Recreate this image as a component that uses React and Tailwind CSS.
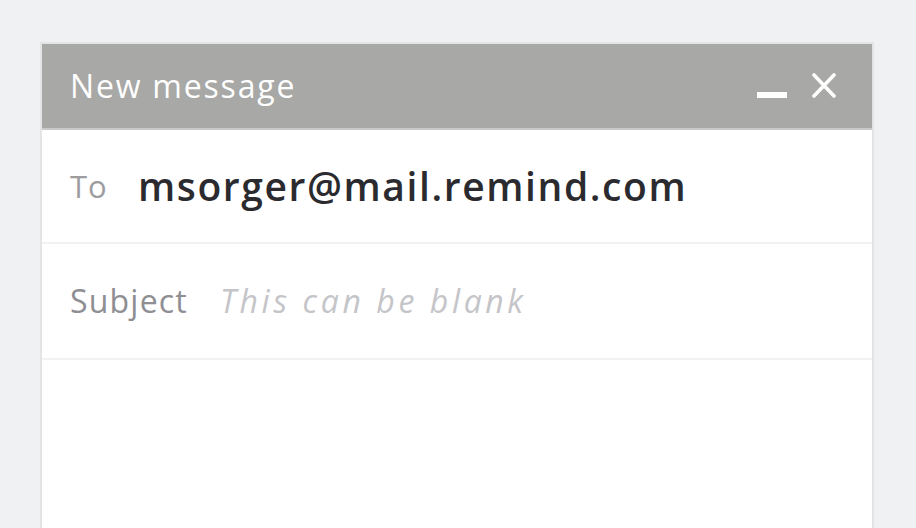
import React from 'react';

export default function App() {
  return (
    <div className="w-[916px] h-[528px] overflow-hidden bg-[#f0f1f3] pt-[42px] pl-[40px] pr-[42px]" style={{ fontFamily: '"Open Sans", Lato, sans-serif' }}>
      <div className="border-2 border-b-0 border-[#e3e4e6] bg-white h-[500px]">
        {/* Header */}
        <div className="h-[86px] bg-[#a8a8a6] border-b-2 border-[#c9c9c9] flex items-center justify-between pl-[28px] pr-[36px]">
          <span className="text-white text-[32px] tracking-[1.8px]">New message</span>
          <div className="flex items-center gap-[25px]">
            <svg width="30" height="28" viewBox="0 0 30 28">
              <rect x="0" y="20" width="30" height="6" fill="white" />
            </svg>
            <svg width="24" height="28" viewBox="0 0 24 28">
              <path d="M2 3 L22 24 M22 3 L2 24" stroke="white" strokeWidth="3.6" strokeLinecap="round" />
            </svg>
          </div>
        </div>

        {/* To row */}
        <div className="h-[114px] border-b-2 border-[#f2f2f3] flex items-center pl-[28px]">
          <span className="text-[#9d9da0] text-[31px] tracking-[1px] w-[68px]">To</span>
          <span className="text-[#2b2b2f] text-[39px] font-semibold tracking-[1.6px]">msorger@mail.remind.com</span>
        </div>

        {/* Subject row */}
        <div className="h-[116px] border-b-2 border-[#f2f2f3] flex items-center pl-[28px]">
          <span className="text-[#8e8e93] text-[32px] tracking-[1.2px] w-[150px]">Subject</span>
          <span className="text-[#c5c5c9] text-[32px] italic tracking-[3.6px]">This can be blank</span>
        </div>
      </div>
    </div>
  );
}
